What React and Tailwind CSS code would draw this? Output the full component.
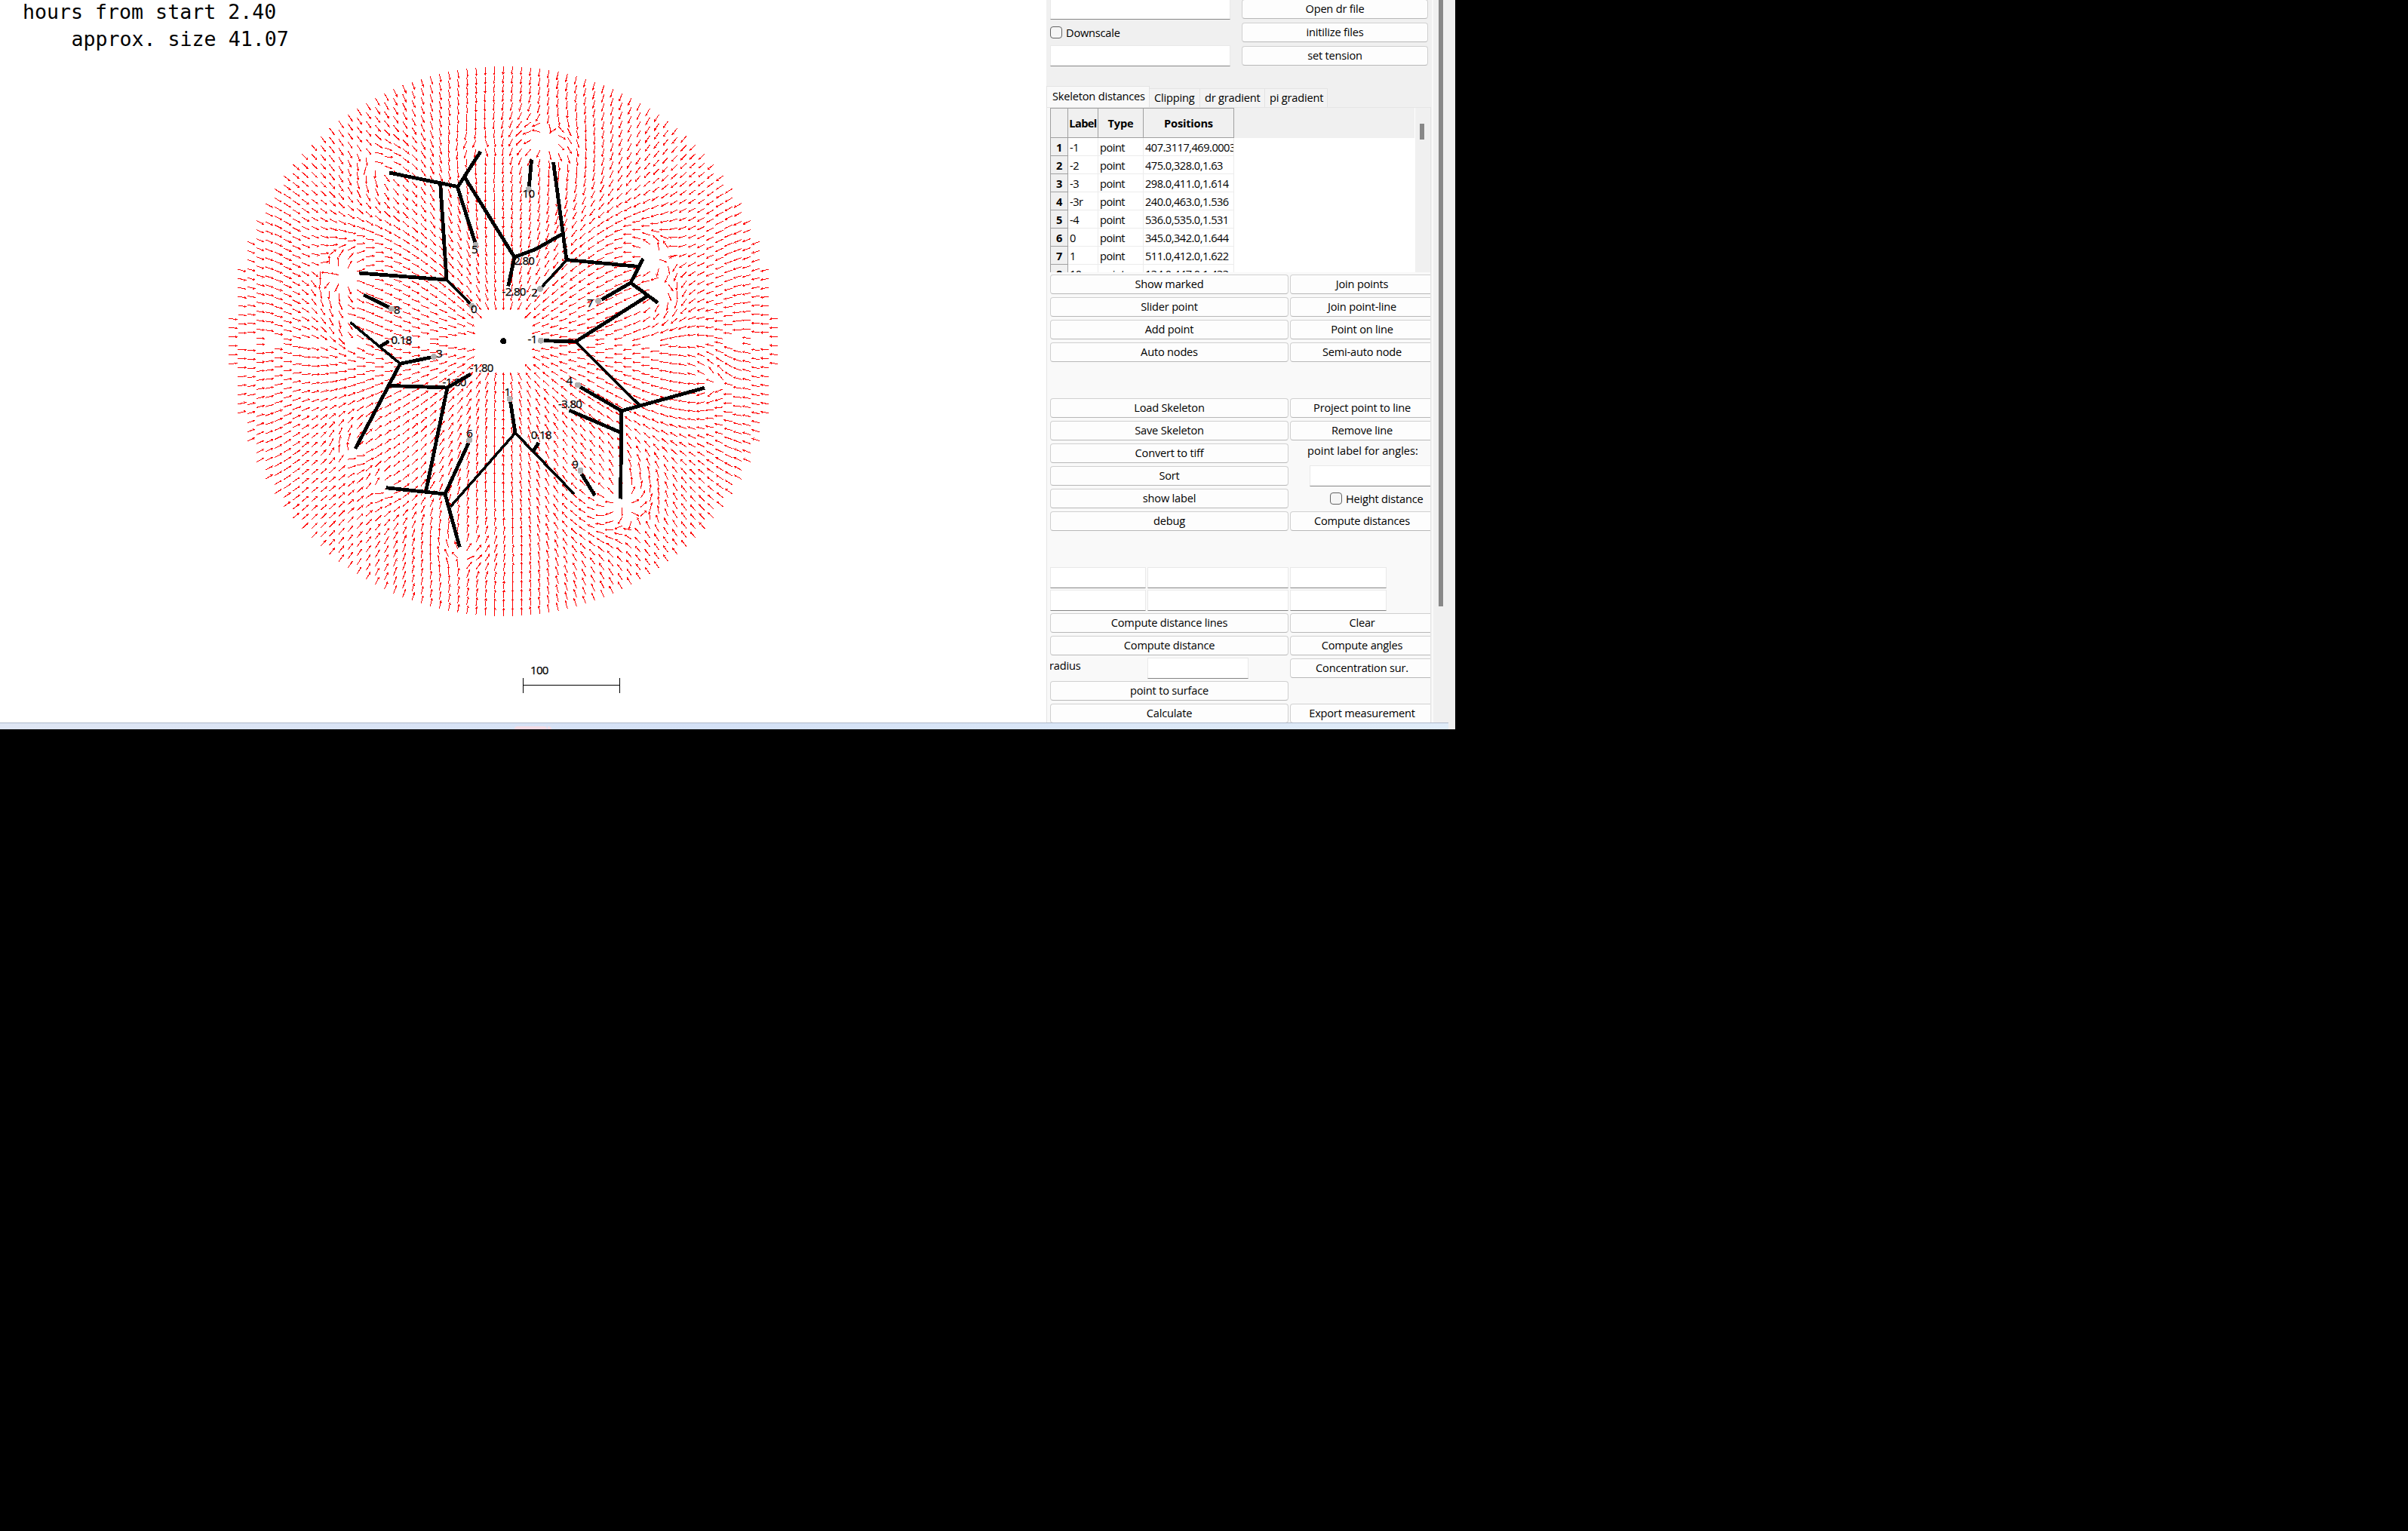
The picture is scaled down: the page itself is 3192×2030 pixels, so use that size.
import React from "react";

const CENTER = { x: 667.3, y: 452.5 };
const FIELD_RADIUS = 364.5;
const STEP = 12;

// [x, y, strength, reach]: points the flow is pushed away from
const SOURCES = [
  [722, 192, 30, 130],
  [462, 368, 40, 130],
  [862, 343, 26, 120],
  [872, 388, 24, 120],
  [822, 664, 40, 140],
  [614, 732, 18, 110],
  [503, 222, 20, 120],
  [634, 194, 12, 90],
  [468, 598, 18, 120],
  [942, 507, 18, 130],
  [504, 642, 14, 90],
  [463, 424, 16, 90],
];

function direction(x, y) {
  const cx = CENTER.x - x;
  const cy = CENTER.y - y;
  const r = Math.hypot(cx, cy);
  let vx = cx / r;
  let vy = cy / r;
  for (const [sx, sy, q, reach] of SOURCES) {
    const dx = x - sx;
    const dy = y - sy;
    const d2 = dx * dx + dy * dy;
    const k = (q * Math.exp(-d2 / (reach * reach))) / (d2 + 120);
    vx += dx * k;
    vy += dy * k;
  }
  const m = Math.hypot(vx, vy) || 1;
  return [vx / m, vy / m];
}

function buildField() {
  let shafts = "";
  let heads = "";
  const arrow = (x, y) => {
    if (Math.hypot(x - CENTER.x, y - CENTER.y) < 47) return;
    if (SOURCES.some(([sx, sy, q]) => q > 22 && Math.hypot(x - sx, y - sy) < 9)) return;
    const [ux, uy] = direction(x, y);
    const ex = x + ux * 11.3;
    const ey = y + uy * 11.3;
    const bx = x + ux * 8.4;
    const by = y + uy * 8.4;
    shafts += `M${x.toFixed(1)} ${y.toFixed(1)}L${ex.toFixed(1)} ${ey.toFixed(1)}`;
    heads += `M${ex.toFixed(1)} ${ey.toFixed(1)}L${(bx - uy * 1.7).toFixed(1)} ${(by + ux * 1.7).toFixed(1)}L${(bx + uy * 1.7).toFixed(1)} ${(by - ux * 1.7).toFixed(1)}Z`;
  };
  for (let k = -30; k <= 30; k++) {
    const x = 667.3 + (STEP + 0.13) * k;
    const dx = x - CENTER.x;
    const h = Math.sqrt(Math.max(900, FIELD_RADIUS * FIELD_RADIUS - dx * dx));
    for (let d = h; d > STEP / 4; d -= STEP) {
      arrow(x, CENTER.y - d);
      arrow(x, CENTER.y + d);
    }
  }
  return { shafts, heads };
}

const FIELD = buildField();

const THICK = [
  "M516 229L607 247.5L637 201",
  "M583.7 244L592 371",
  "M476 362L592 371",
  "M606 247L630 322",
  "M616 235L682 341L673.7 379.5",
  "M482 391L517.5 408.5",
  "M682 341L710 330.5L746 310",
  "M733.5 215L751 344.5L847 353.5",
  "M852.5 343L836 375L797.5 397.3",
  "M836 375L872 401.5",
  "M859 392L763 453L721 451.7",
  "M704.6 211.5L701.3 247.5",
  "M934 514.3L824 544.8L768.5 512.8",
  "M823.7 544.8L823.3 600L822.6 661.5",
  "M824 574L754.5 544",
  "M788.5 657L771 628.5",
  "M683 574L676.7 533",
  "M707 598L714 587",
  "M609.3 725.5L590 655L511.5 646.7",
  "M564.7 651L593 514",
  "M590 655L621 587.5",
  "M516.5 511.4L593 514L624 496",
  "M471 595L530.5 482.3L572 473.7",
  "M504 459.3L515.5 452.3",
];
const THIN = [
  "M592 371L623 402.5",
  "M751 345L718.7 380",
  "M763 453L847.5 537",
  "M683 574L761 655",
  "M683 574L597 672",
  "M530.5 482.3L464.5 427.5",
];
const DOTS = [
  [519, 409.5], [630.5, 325], [625.5, 405.5], [700.7, 251], [716, 383], [793, 399],
  [717, 451.7], [766, 510.5], [769.5, 624], [675.7, 529], [622.3, 583.3], [575, 473],
];
const LABELS = [
  ["5", 625, 335.7], ["-2.80", 665.5, 392.3], ["-2.80", 677, 350.7], ["8", 522, 415.7],
  ["0", 624, 415], ["10", 692.5, 261.7], ["2", 704.3, 393], ["7", 778, 406.7],
  ["0.18", 518.5, 455.7], ["3", 578.3, 474], ["-1.80", 622.5, 493], ["-1.80", 586.5, 511.7],
  ["1", 668.5, 525], ["6", 618.3, 579.7], ["-1", 699.5, 454.7], ["4", 750.6, 510],
  ["-3.80", 740, 541], ["0.18", 703.8, 581.7], ["9", 758.3, 620.7], ["100", 703, 893.5],
];

function Plot() {
  return (
    <svg className="block h-[958px] w-[1387px]" viewBox="0 0 1387 958">
      <g shapeRendering="crispEdges">
        <path d={FIELD.shafts} stroke="#ff0000" strokeWidth="1" fill="none" />
        <path d={FIELD.heads} fill="#ff0000" />
        <path d={THICK.join("")} stroke="#000" strokeWidth="4.8" fill="none" />
        <path d={THIN.join("")} stroke="#000" strokeWidth="3.6" fill="none" />
        {DOTS.map(([x, y]) => (
          <circle key={x} cx={x} cy={y} r="4" fill="#b0b0b0" />
        ))}
        <circle cx="667.3" cy="452.3" r="4" fill="#000" />
        <path d="M693.5 899V919M821.5 899V919M693.5 908.5H821.5" stroke="#000" strokeWidth="1" />
      </g>
      <g className="font-['Open_Sans',sans-serif] text-[15px] tracking-[-0.65px]">
        {LABELS.map(([t, x, y], i) => (
          <text key={i} x={x} y={y} stroke="#000" strokeWidth="0.25">{t}</text>
        ))}
      </g>
      <g className="font-['DejaVu_Sans_Mono',monospace] text-[26.6px]">
        <text x="30" y="25">hours from start 2.40</text>
        <text x="94.5" y="61">approx. size 41.07</text>
      </g>
    </svg>
  );
}

function Button({ children, className = "" }) {
  return (
    <button className={`block h-[26px] shrink-0 rounded-[4px] border border-[#d0d0d0] border-b-[#b8b8b8] bg-[#fdfdfd] pb-[2px] text-center leading-[22px] whitespace-nowrap ${className}`}>
      {children}
    </button>
  );
}

function Field({ className = "" }) {
  return <div className={`h-[28px] shrink-0 border border-[#e9e9e9] border-b-[#868686] bg-white ${className}`} />;
}

function Check({ label, className = "" }) {
  return (
    <div className={`flex items-center gap-[5px] ${className}`}>
      <span className="size-[16px] shrink-0 rounded-[4px] border border-[#626262] bg-[#f5f5f5]" />
      <span className="leading-[20px] whitespace-nowrap">{label}</span>
    </div>
  );
}

const ROWS = [
  ["-1", "407.3117,469.0003"],
  ["-2", "475.0,328.0,1.63"],
  ["-3", "298.0,411.0,1.614"],
  ["-3r", "240.0,463.0,1.536"],
  ["-4", "536.0,535.0,1.531"],
  ["0", "345.0,342.0,1.644"],
  ["1", "511.0,412.0,1.622"],
  ["10", "134.0,447.0,1.433"],
];

function Table() {
  const head = "h-[40px] shrink-0 border-r border-y border-[#a0a0a0] bg-[#f0f0f0] text-center font-bold leading-[38px] overflow-hidden whitespace-nowrap";
  const cell = "h-[24px] shrink-0 border-r border-b border-[#ececec] pl-[2px] leading-[24px] tracking-[-0.5px] overflow-hidden whitespace-nowrap";
  return (
    <div className="ml-[4px] flex h-[218px] w-[504px] overflow-hidden">
      <div className="w-[483px] shrink-0 bg-white">
        <div className="flex bg-[#f0f0f0]">
          <div className={`${head} w-[24px] border-l`} />
          <div className={`${head} w-[40px] tracking-[-0.6px]`}>Label</div>
          <div className={`${head} w-[60px]`}>Type</div>
          <div className={`${head} w-[120px]`}>Positions</div>
        </div>
        {ROWS.map(([label, pos], i) => (
          <div key={label} className="flex">
            <div className="h-[24px] w-[24px] shrink-0 border-x border-b border-[#a0a0a0] bg-[#f0f0f0] text-center leading-[24px] font-bold">{i + 1}</div>
            <div className={`${cell} w-[40px]`}>{label}</div>
            <div className={`${cell} w-[60px]`}>point</div>
            <div className={`${cell} w-[120px]`}>{pos}</div>
          </div>
        ))}
      </div>
      <div className="flex w-[21px] shrink-0 border-l border-white bg-[#f0f0f0] pt-[21px] pl-[6px]">
        <div className="h-[21px] w-[6px] bg-[#888888]" />
      </div>
    </div>
  );
}

function Pair({ left, right }) {
  return (
    <div className="flex h-[30px] gap-[2px]">
      <Button className="w-[316px]">{left}</Button>
      {right && <Button className="w-[191px]">{right}</Button>}
    </div>
  );
}

function Tab({ children, className }) {
  return (
    <div className={`h-[25px] border border-b-0 border-l-0 border-[#e3e3e3] bg-[#f3f3f3] leading-[22px] whitespace-nowrap ${className}`}>{children}</div>
  );
}

function Panel() {
  return (
    <aside className="flex h-[958px] w-[542px] overflow-hidden bg-[#f0f0f0] font-['Open_Sans',sans-serif] text-[14.6px] tracking-[-0.2px] text-black">
      <div className="w-[511px] shrink-0 overflow-hidden">
        <div className="flex h-[114px] gap-[14px] pl-[5px]">
          <div className="w-[240px] shrink-0">
            <Field className="-mt-[2px] w-[239px]" />
            <Check label="Downscale" className="mt-[7px] h-[20px]" />
            <Field className="mt-[7px] w-[239px]" />
          </div>
          <div className="flex flex-col gap-[5px]">
            <Button className="-mt-[1px] w-[247px]">Open dr file</Button>
            <Button className="w-[247px]">initilize files</Button>
            <Button className="w-[247px]">set tension</Button>
          </div>
        </div>
        <div className="flex h-[28px] items-end">
          <div className="h-[28px] w-[137px] border border-b-0 border-[#e3e3e3] bg-[#f9f9f9] pl-[7px] leading-[24px] tracking-[-0.2px] whitespace-nowrap">Skeleton distances</div>
          <Tab className="w-[67px] pl-[6px]">Clipping</Tab>
          <Tab className="w-[86px] pl-[6px]">dr gradient</Tab>
          <Tab className="w-[83px] pl-[6px]">pi gradient</Tab>
        </div>
        <div className="h-[816px] w-[510px] border border-b-0 border-[#e5e5e5] bg-[#f9f9f9]">
          <Table />
          <div className="ml-[4px] w-[504px] overflow-hidden pt-[3px]">
            <Pair left="Show marked" right="Join points" />
            <Pair left="Slider point" right="Join point-line" />
            <Pair left="Add point" right="Point on line" />
            <Pair left="Auto nodes" right="Semi-auto node" />
            <div className="h-[44px]" />
            <Pair left="Load Skeleton" right="Project point to line" />
            <Pair left="Save Skeleton" right="Remove line" />
            <div className="flex h-[90px] gap-[2px]">
              <div className="w-[316px] shrink-0">
                <Pair left="Convert to tiff" />
                <Pair left="Sort" />
                <Pair left="show label" />
              </div>
              <div className="w-[191px] shrink-0">
                <div className="h-[29px] pl-[23px] leading-[19px] tracking-[0px] whitespace-nowrap">point label for angles:</div>
                <Field className="ml-[26px] w-[170px]" />
                <Check label="Height distance" className="mt-[6px] ml-[53px] h-[20px]" />
              </div>
            </div>
            <Pair left="debug" right="Compute distances" />
            <div className="mt-[44px] flex h-[30px] gap-[2px]">
              <Field className="w-[127px]" />
              <Field className="w-[187px]" />
              <Field className="w-[128px]" />
            </div>
            <div className="flex h-[31px] gap-[2px]">
              <Field className="w-[127px]" />
              <Field className="w-[187px]" />
              <Field className="w-[128px]" />
            </div>
            <Pair left="Compute distance lines" right="Clear" />
            <Pair left="Compute distance" right="Compute angles" />
            <div className="flex h-[30px]">
              <div className="-ml-px w-[130px] shrink-0 leading-[18px]">radius</div>
              <Field className="-mt-px w-[134px]" />
              <div className="w-[55px] shrink-0" />
              <Button className="w-[191px]">Concentration sur.</Button>
            </div>
            <Pair left="point to surface" />
            <Pair left="Calculate" right="Export measurement" />
          </div>
        </div>
      </div>
      <div className="h-full w-[2px] shrink-0 bg-[#fafafa]" />
      <div className="ml-[7px] h-[804px] w-[6px] bg-[#888888]" />
    </aside>
  );
}

export default function App() {
  return (
    <div className="h-[2030px] w-[3192px] overflow-hidden bg-black">
      <div className="h-[967px] w-[1929px] bg-[#f0f0f0]">
        <main className="flex">
          <section className="w-[1387px] shrink-0 bg-white">
            <Plot />
          </section>
          <Panel />
        </main>
        <footer className="flex h-[9px] w-[1920px] items-end border-t border-[#aeb9cb] bg-linear-to-r from-[#dfe6f4] via-[#d4e1f6] to-[#e0ecf8] pl-[682px]">
          <div className="h-[4px] w-[43px] rounded-t-[4px] bg-[#f3dbe5]" />
          <div className="ml-[1px] h-[4px] w-[5px] rounded-tr-[4px] bg-[#f3dbe5]" />
        </footer>
      </div>
    </div>
  );
}
